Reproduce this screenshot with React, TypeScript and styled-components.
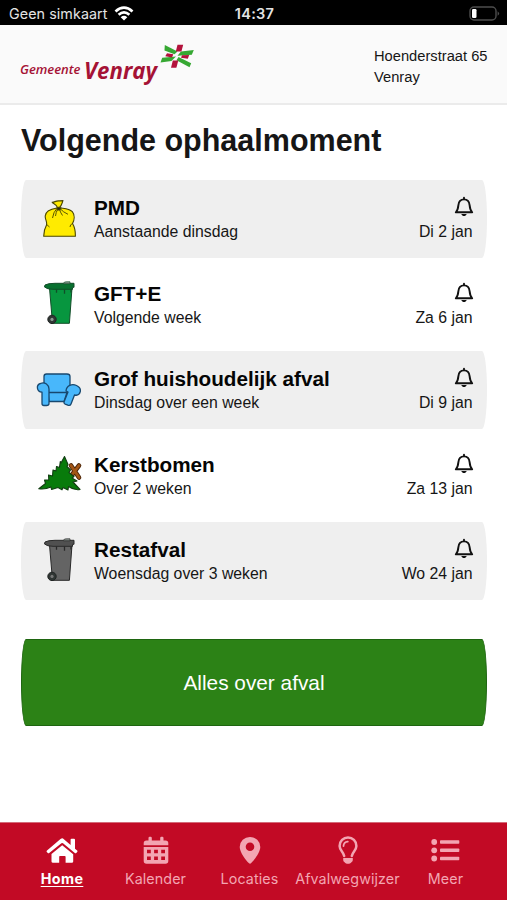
import React from 'react';
import styled, { createGlobalStyle, css } from 'styled-components';

const Global = createGlobalStyle`
  * { box-sizing: border-box; }
  body { margin: 0; background: #fff; font-family: "Liberation Sans", Arial, sans-serif; color: #161616; }
  h1, h2, p { margin: 0; }
  svg { display: block; flex: none; }
`;

const Screen = styled.div`
  width: 100%;
  height: 900px;
  display: flex;
  flex-direction: column;
  overflow: hidden;
`;

const StatusBar = styled.div`
  height: 25px;
  background: #000;
  color: #e4e4e4;
  display: grid;
  grid-template-columns: 1fr auto 1fr;
  align-items: center;
  padding: 2px 7px 0 9px;
  font: 14.3px/20px Inter, sans-serif;
`;

const Carrier = styled.div`
  display: flex;
  align-items: center;
  gap: 6px;
  letter-spacing: 0.08px;
`;

const Clock = styled.div`
  font-weight: 600;
  font-size: 14.5px;
  letter-spacing: 0.3px;
`;

const BatterySlot = styled.div`
  justify-self: end;
`;

const Header = styled.header`
  height: 80px;
  background: #fafafa;
  border-bottom: 2px solid #ebebeb;
  display: flex;
  justify-content: space-between;
  padding: 18px 20px 0 20px;
`;

const Address = styled.div`
  width: 113px;
  padding-top: 3px;
  font-size: 14.7px;
  line-height: 20.5px;
  white-space: nowrap;
`;

const Main = styled.main`
  flex: 1;
  padding: 14.5px 20px 0 21px;
`;

const Title = styled.h1`
  font-size: 30.5px;
  line-height: 40px;
  height: 60px;
  white-space: nowrap;
`;

const List = styled.div`
  display: flex;
  flex-direction: column;
  gap: 7.5px;
`;

const Card = styled.div<{ $shaded: boolean }>`
  height: 78px;
  display: flex;
  align-items: center;
  padding: 0 14.5px 0 14px;
  border-radius: 5px / 50%;
  background: ${(p) => (p.$shaded ? '#efefef' : 'transparent')};
`;

const IconSlot = styled.div`
  width: 59px;
`;

const Details = styled.div`
  flex: 1;
  padding-top: 2px;
`;

const Name = styled.h2`
  font-size: 20.7px;
  line-height: 24px;
  color: #050505;
`;

const When = styled.p`
  font-size: 15.8px;
  line-height: 23px;
`;

const Schedule = styled.div`
  display: flex;
  flex-direction: column;
  align-items: flex-end;
  padding-top: 1px;
  svg { margin: 1px -2px 2px 0; }
`;

const Action = styled.button`
  display: block;
  width: 100%;
  height: 87px;
  margin-top: 39px;
  padding: 2px 0 0;
  border: 1px solid #1e6510;
  border-radius: 5px / 50%;
  background: #2c8216;
  color: #fff;
  font: 20.8px "Liberation Sans", Arial, sans-serif;
`;

const TabBar = styled.nav`
  height: 78px;
  background: #c20a25;
  border-top: 1px solid #d46a78;
  display: grid;
  grid-template-columns: 109px 78px 110px 86px 110px;
  padding-left: 7.5px;
`;

const Tab = styled.a<{ $active?: boolean }>`
  display: flex;
  flex-direction: column;
  align-items: center;
  padding-top: 13px;
  color: #f3a5b2;
  font: 14.3px/20px Inter, sans-serif;
  letter-spacing: 0.1px;
  white-space: nowrap;
  svg { height: 30px; margin-bottom: 3px; }
  ${(p) => p.$active && css`
    color: #fff;
    font-weight: 700;
    letter-spacing: 0.4px;
    text-decoration: underline;
    text-underline-offset: 2px;
  `}
`;

const Wifi = () => (
  <svg width="20" height="16" viewBox="0 0 20 16" fill="none" stroke="#fff" strokeWidth="2.7">
    <path d="M1.5 5.4Q10-2.1 18.5 5.4M4.6 8.8Q10 3.9 15.4 8.8" />
    <path d="M10 14.5 6.7 11.2Q10 8.5 13.3 11.2Z" fill="#fff" stroke="none" />
  </svg>
);

const Battery = () => (
  <svg width="31" height="16" viewBox="0 0 31 16">
    <rect x="1" y="1" width="26" height="13" rx="4" fill="none" stroke="#4d4d4d" strokeWidth="1.4" />
    <rect x="3" y="3" width="4.5" height="9" rx="1.3" fill="#fff" />
    <path d="M28.6 5.2q3 2.3 0 4.6Z" fill="#4d4d4d" />
  </svg>
);

const Logo = () => (
  <svg width="176" height="46" viewBox="20 43 176 46">
    <g fill="#a51235" fontFamily='"Open Sans", "Noto Sans", sans-serif' fontStyle="italic">
      <text x="20" y="74" fontSize="12.5" fontWeight="600" textLength="60.5" lengthAdjust="spacingAndGlyphs">Gemeente</text>
      <text x="84" y="78.5" fontSize="22.5" fontWeight="700" textLength="73" lengthAdjust="spacingAndGlyphs">Venray</text>
    </g>
    <g fill="#36a832">
      <path d="M164.8 45 177.5 51.5 174.5 54.3 164.5 50.5Z" />
      <path d="M193.8 50 191.8 54.8 177.5 55.8 181 51.6Z" />
      <path d="M162.2 57.8 176 56.6 171.5 61 160.5 62.6Z" />
      <path d="M178.5 57 191.2 63.3 189.5 67.3 176.5 60.2Z" />
    </g>
    <g fill="#b3123c">
      <path d="M177.5 44.8H183.2L181.4 51.4H175.8Z" />
      <path d="M172.8 60.6H178.3L176.4 67.7H171Z" />
      <path d="M167 53.3 173.3 54.2 172 57.4 165.3 56.2Z" />
      <path d="M182 55.3 189.2 54.9 187.8 58.7 181 57.8Z" />
    </g>
  </svg>
);

const Bell = () => (
  <svg width="22" height="22" viewBox="0 0 22 22" fill="none" stroke="#111" strokeWidth="1.9" strokeLinejoin="round" strokeLinecap="round">
    <path d="M11 1.7V3.3M2.8 16.3H19.2C17.3 14.4 16.9 12.7 16.6 9.2 16.3 5.5 14.2 3.4 11 3.4S5.7 5.5 5.4 9.2C5.1 12.7 4.7 14.4 2.8 16.3Z" />
    <path d="M9 18.8Q11 21.1 13 18.8Z" fill="#111" strokeWidth="1" />
  </svg>
);

const Bag = () => (
  <svg width="46" height="46" viewBox="0 0 46 46" fill="#ffeb00" stroke="#494600" strokeWidth="1.1" strokeLinejoin="round">
    <path d="M22 12C16 13 10.5 14.5 10.2 20C10 24 12.5 25.5 11.5 29C9.3 33 8.7 36 8.7 40.2H40.4C40.5 35 39.8 31 37.5 27.5C39.5 24 40 19 37.3 15.7C34 12.5 29 12.5 26 12Z" />
    <path d="M22.5 11.5C21 8 18.5 8 17.2 6.3C20 6.3 20.5 4.5 24.5 4.9L28 4.6C27 7 27 9 24.5 11.5Z" />
    <path d="M21.5 13Q18.5 16 17.5 22M22.5 13.5Q21 16 20.5 20M24.5 13Q25 16 27.5 19.5M25.5 13Q28 16 33 18.3M37.5 27.5Q35 28.5 35 31M11.2 28 14.5 31" fill="none" strokeWidth=".9" />
    <path d="M21.8 12Q23.7 10.8 26 12L24.8 14H22.5Z" fill="#222" />
  </svg>
);

const Bin = ({ body, lid, line, hub }: { body: string; lid: string; line: string; hub: string }) => (
  <svg width="46" height="46" viewBox="0 0 46 46" stroke={line} strokeWidth="1" strokeLinejoin="round">
    <path d="M14.5 7H37L34.4 42.3H17.5Z" fill={body} />
    <path d="M10 4Q13 2.3 20 2.3H39V6.3H37.5V8.3H18Q12 8.3 9.5 6Z" fill={lid} />
    <path d="M28.5 2.2Q28.8.6 32 .8H35V2.8H28.5Z" fill="#8c9690" strokeWidth=".7" />
    <path d="M21.5 8.5V11.8M29.5 8.5V12.8M36 8.5V11.5" fill="none" strokeWidth="1.3" />
    <circle cx="17" cy="38.4" r="4.2" fill="#303634" stroke="#202423" />
    <circle cx="17" cy="38.4" r="1.6" fill={hub} stroke="none" />
  </svg>
);

const Chair = () => (
  <svg width="46" height="46" viewBox="0 0 46 46" fill="#48b7fb" stroke="#18486f" strokeWidth="1.3" strokeLinejoin="round">
    <path d="M9 17V9.5Q9 7 11.5 7H32Q35 7 35 9.5V26H9Z" />
    <path d="M13 25.5H32L29 34.5H14Z" />
    <path d="M7 25.2C1.5 24.5.8 17.8 5.5 16.5C10 14.7 14 18 14 22V36.5Q14 38.5 11.5 38.5H9Q7 38.5 7 36.5Z" />
    <path d="M31 24C31.5 18.5 37 16.5 41.5 18.5C48 21.5 45.5 29.5 39.5 28L36 37Q35.2 39 32.8 38.2L30.2 37.2Q28.5 36.5 29.2 34.5L33 25Z" />
  </svg>
);

const Tree = () => (
  <svg width="48" height="46" viewBox="0 0 48 46" strokeLinejoin="round">
    <g strokeLinecap="round" fill="none">
      <path d="M36 13.5 44 25.5M44 13.5 35 25.5" stroke="#4c2609" strokeWidth="4.6" />
      <path d="M36 13.5 44 25.5M44 13.5 35 25.5" stroke="#a35616" strokeWidth="2.8" />
    </g>
    <path d="M29.5 4.5 26 11 25.3 9.5 24.5 15.5 21.5 14.5 21 19 18 18 17.5 24 13.5 23 13.8 28 9.5 28 10.5 31.5 3.8 36.8Q10 37.7 16 35L16.5 37.5 23 35.5 27 37.8 28 35.5 33 38 33.5 34.5Q39 38.5 45 37.5L38 30 42 29 37 26 39 24.5 34 20.5 35.5 18 32 14.5 33 12.5Z" fill="#087b0b" stroke="#123e12" strokeWidth="1.1" />
  </svg>
);

const HomeIcon = () => (
  <svg width="32" height="30" viewBox="0 0 32 30" fill="currentColor">
    <path d="M15.5 2.4Q16.3 2.1 17 2.6L24.6 9.1V3.5Q24.6 2.7 25.5 2.7H28Q29 2.7 29 3.7V12.7L31.2 14.6Q32 15.4 31 16.3L30.2 17Q29.5 17.6 28.8 17L17 7.2Q16.2 6.6 15.4 7.2L3.2 17Q2.4 17.6 1.8 17L.8 16Q.1 15.2 1 14.4L14.5 3Z" />
    <path d="M16.2 9.2 27.2 18.3V25.5Q27.2 26.8 25.8 26.8H19.6V20.8Q19.6 19.9 18.7 19.9H14Q13.2 19.9 13.2 20.8V26.8H7Q5.5 26.8 5.5 25.4V18Z" />
  </svg>
);

const CalendarIcon = () => (
  <svg width="26" height="30" viewBox="0 0 26 30" fill="currentColor">
    <path fillRule="evenodd" d="M5.5 4.5V2Q5.5.8 6.7.8H7.6Q8.8.8 8.8 2V4.5H17.2V2Q17.2.8 18.4.8H19.3Q20.5.8 20.5 2V4.5H22.5Q25.3 4.5 25.3 7.2V9.2H.7V7.2Q.7 4.5 3.5 4.5ZM.7 11H25.3V25Q25.3 27.7 22.5 27.7H3.5Q.7 27.7.7 25ZM4 13.8V17.2H7.8V13.8ZM11.1 13.8V17.2H14.9V13.8ZM18.2 13.8V17.2H22V13.8ZM4 20.6V24H7.8V20.6ZM11.1 20.6V24H14.9V20.6ZM18.2 20.6V24H22V20.6Z" />
  </svg>
);

const PinIcon = () => (
  <svg width="22" height="30" viewBox="0 0 22 30" fill="currentColor">
    <path fillRule="evenodd" d="M11 .9A10.2 10.2 0 0 1 21.3 11C21.3 16.2 15.2 24.3 12 27.2Q11 28.1 10 27.2C6.8 24.3.7 16.2.7 11A10.2 10.2 0 0 1 11 .9M11 6.5A4.3 4.3 0 1 0 11 15.1A4.3 4.3 0 1 0 11 6.5" />
  </svg>
);

const BulbIcon = () => (
  <svg width="20" height="30" viewBox="0 0 20 30" fill="none" stroke="currentColor" strokeWidth="2.5" strokeLinecap="round">
    <path d="M6.2 20C5.6 15.8 1.6 14.5 1.6 9.9A8.4 8.4 0 0 1 18.4 9.9C18.4 14.5 14.4 15.8 13.8 20" />
    <path d="M5.5 10Q5.7 6 9.8 5.6" strokeWidth="1.8" />
    <path d="M5.2 22H14.8V24Q14.8 25.3 13.7 26L12.7 27Q12 27.8 11 27.8H9Q8 27.8 7.3 27L6.3 26Q5.2 25.3 5.2 24Z" fill="currentColor" stroke="none" />
  </svg>
);

const MenuIcon = () => (
  <svg width="29" height="30" viewBox="0 0 29 30" fill="currentColor">
    {[6, 14.3, 22.5].map((y) => (
      <g key={y}>
        <circle cx="3.2" cy={y} r="2.9" />
        <rect x="9" y={y - 1.8} width="19.3" height="3.6" rx=".8" />
      </g>
    ))}
  </svg>
);

const pickups = [
  { name: 'PMD', when: 'Aanstaande dinsdag', date: 'Di 2 jan', icon: <Bag /> },
  { name: 'GFT+E', when: 'Volgende week', date: 'Za 6 jan', icon: <Bin body="#07963f" lid="#08702f" line="#124d29" hub="#8b9b92" /> },
  { name: 'Grof huishoudelijk afval', when: 'Dinsdag over een week', date: 'Di 9 jan', icon: <Chair /> },
  { name: 'Kerstbomen', when: 'Over 2 weken', date: 'Za 13 jan', icon: <Tree /> },
  { name: 'Restafval', when: 'Woensdag over 3 weken', date: 'Wo 24 jan', icon: <Bin body="#646464" lid="#505050" line="#292929" hub="#777" /> },
];

const tabs = [
  { label: 'Home', icon: <HomeIcon />, active: true },
  { label: 'Kalender', icon: <CalendarIcon /> },
  { label: 'Locaties', icon: <PinIcon /> },
  { label: 'Afvalwegwijzer', icon: <BulbIcon /> },
  { label: 'Meer', icon: <MenuIcon /> },
];

export default function App() {
  return (
    <Screen>
      <Global />
      <StatusBar>
        <Carrier>Geen simkaart <Wifi /></Carrier>
        <Clock>14:37</Clock>
        <BatterySlot><Battery /></BatterySlot>
      </StatusBar>
      <Header>
        <Logo />
        <Address>Hoenderstraat 65<br />Venray</Address>
      </Header>
      <Main>
        <Title>Volgende ophaalmoment</Title>
        <List>
          {pickups.map((p, i) => (
            <Card key={p.name} $shaded={i % 2 === 0}>
              <IconSlot>{p.icon}</IconSlot>
              <Details>
                <Name>{p.name}</Name>
                <When>{p.when}</When>
              </Details>
              <Schedule>
                <Bell />
                <When>{p.date}</When>
              </Schedule>
            </Card>
          ))}
        </List>
        <Action>Alles over afval</Action>
      </Main>
      <TabBar>
        {tabs.map((t) => (
          <Tab key={t.label} $active={t.active}>{t.icon}{t.label}</Tab>
        ))}
      </TabBar>
    </Screen>
  );
}
